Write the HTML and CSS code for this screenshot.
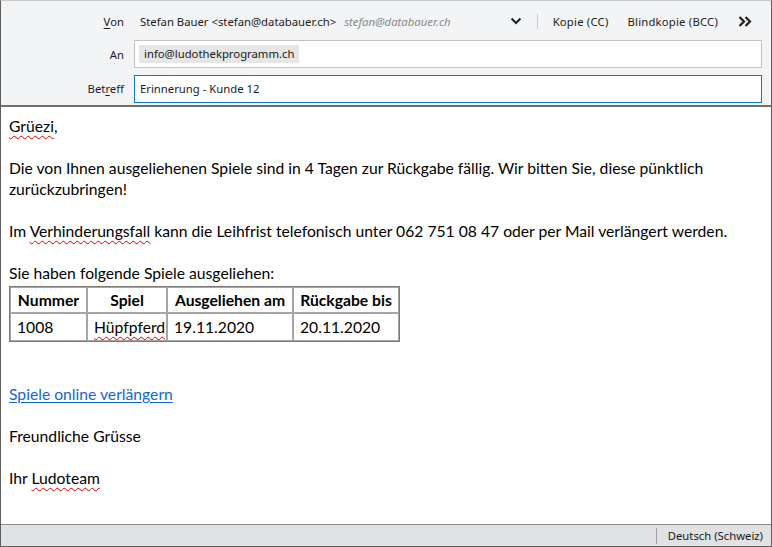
FILE: index.html
```html
<!DOCTYPE html>
<html lang="de">
<head>
<meta charset="utf-8">
<title>Erinnerung - Kunde 12</title>
<link rel="stylesheet" href="styles.css">
</head>
<body>
<div class="window">
  <div class="header">
    <div class="row row-from">
      <div class="label"><u>V</u>on</div>
      <div class="from-field">
        <span class="from-name">Stefan Bauer &lt;stefan@databauer.ch&gt;</span>
        <span class="from-alt">stefan@databauer.ch</span>
        <span class="spacer"></span>
        <svg class="chev" width="12" height="8" viewBox="0 0 12 8"><polyline points="1.5,1.5 6,6 10.5,1.5" fill="none" stroke="#222" stroke-width="2"/></svg>
        <span class="vsep"></span>
        <span class="hbtn">Kopie (CC)</span>
        <span class="hbtn">Blindkopie (BCC)</span>
        <svg class="more" width="14" height="11" viewBox="0 0 14 11"><polyline points="1.5,1 6,5.5 1.5,10" fill="none" stroke="#222" stroke-width="2.2"/><polyline points="7.5,1 12,5.5 7.5,10" fill="none" stroke="#222" stroke-width="2.2"/></svg>
      </div>
    </div>
    <div class="row row-to">
      <div class="label">An</div>
      <div class="box">
        <span class="chip">info@ludothekprogramm.ch</span>
      </div>
    </div>
    <div class="row row-subj">
      <div class="label">Bet<u>r</u>eff</div>
      <div class="box box-focus">Erinnerung - Kunde 12</div>
    </div>
  </div>

  <div class="body">
    <p class="line"><span class="sp">Grüezi</span>,</p>
    <p class="line"></p>
    <p class="line">Die von Ihnen ausgeliehenen Spiele sind in 4 Tagen zur Rückgabe fällig. Wir bitten Sie, diese pünktlich zurückzubringen!</p>
    <p class="line"></p>
    <p class="line">Im <span class="sp">Verhinderungsfall</span> kann die Leihfrist telefonisch unter 062 751 08 47 oder per Mail verlängert werden.</p>
    <p class="line"></p>
    <p class="line">Sie haben folgende Spiele ausgeliehen:</p>
    <table class="games">
      <colgroup>
        <col class="c1"><col class="c2"><col class="c3"><col class="c4">
      </colgroup>
      <tr>
        <th>Nummer</th>
        <th>Spiel</th>
        <th>Ausgeliehen am</th>
        <th>Rückgabe bis</th>
      </tr>
      <tr>
        <td>1008</td>
        <td class="tight"><span class="sp">Hüpfpferd</span></td>
        <td>19.11.2020</td>
        <td>20.11.2020</td>
      </tr>
    </table>
    <p class="line"></p>
    <p class="line"></p>
    <p class="line"><a class="link" href="#">Spiele online verlängern</a></p>
    <p class="line"></p>
    <p class="line">Freundliche Grüsse</p>
    <p class="line"></p>
    <p class="line">Ihr <span class="sp">Ludoteam</span></p>
  </div>

  <div class="status">
    <span class="ssep"></span>
    <span class="lang">Deutsch (Schweiz)</span>
  </div>
</div>
</body>
</html>
```

FILE: styles.css
```css
* { box-sizing: border-box; }
html, body { margin: 0; padding: 0; background: #fff; }

.window {
  width: 772px;
  height: 547px;
  display: flex;
  flex-direction: column;
  border-top: 1px solid #c9c9c9;
  border-left: 1px solid #5e5e5e;
  border-right: 1px solid #5e5e5e;
  border-bottom: 1px solid #5e5e5e;
  overflow: hidden;
}

.header {
  background: #f3f4f6;
  padding: 3px 9px 3px 0;
  border-bottom: 2px solid #6f6f6f;
  font-family: "Noto Sans", sans-serif;
  font-size: 11.3px;
  color: #1b1b1b;
}

.row {
  display: flex;
  align-items: center;
}
.row-from { height: 34px; margin-bottom: 2px; }
.row-to { height: 28px; margin-top: 1px; }
.row-subj { height: 28px; margin-top: 6px; padding-top: 1px; }

.label {
  width: 123px;
  text-align: right;
  flex: none;
  margin-right: 10px;
  color: #1b1b1b;
}
.label u { text-underline-offset: 2px; }

.from-field {
  flex: 1;
  display: flex;
  align-items: center;
  padding-left: 6px;
  padding-right: 10px;
}
.from-alt {
  margin-left: 8px;
  font-style: italic;
  color: #8a8a8a;
}
.spacer { flex: 1; }
.chev { margin-right: 15px; }
.vsep {
  width: 1px;
  height: 15px;
  background: #c8c8c8;
  margin-right: 15px;
}
.hbtn { margin-right: 19px; letter-spacing: 0.2px; }
.more { margin-left: 1px; }

.box {
  flex: 1;
  height: 28px;
  background: #fff;
  border: 1px solid #c2c2c2;
  display: flex;
  align-items: center;
  padding-left: 4px;
}
.box-focus {
  border-color: #0a78d4;
  padding-left: 5px;
}
.chip {
  background: #e6e6e6;
  height: 18px;
  line-height: 18px;
  padding: 0 5px;
}

.body {
  flex: 1;
  padding: 9px 8px 0 8px;
  font-family: "Lato", sans-serif;
  font-size: 15.7px;
  color: #000;
}
.line {
  margin: 0;
  min-height: 21px;
  line-height: 21px;
}
.sp {
  text-decoration: underline wavy #e00000;
  text-decoration-thickness: 1px;
  text-underline-offset: 3px;
}
.link {
  color: #1068d2;
  text-decoration: underline;
  text-underline-offset: 2px;
}

.games {
  border-collapse: separate;
  border-spacing: 0;
  border: 1px solid #7a7a7a;
  margin-top: 2px;
  table-layout: fixed;
  width: 390px;
}
.games th, .games td {
  border: 1px solid #a6a6a6;
  padding: 0 6px;
  line-height: 21px;
  text-align: left;
  white-space: nowrap;
  overflow: hidden;
}
.games th { font-weight: bold; text-align: center; height: 26px; padding: 0 3px; }
.games td { height: 28px; }
.games td.tight { padding: 0 2px 0 6px; overflow: visible; }
.games .c1 { width: 77px; }
.games .c2 { width: 80px; }
.games .c3 { width: 126px; }
.games .c4 { width: 106px; }

.status {
  height: 22px;
  background: #e1e2e4;
  border-top: 1px solid #8a8a8a;
  display: flex;
  align-items: center;
  justify-content: flex-end;
  padding-right: 8px;
  font-family: "Noto Sans", sans-serif;
  font-size: 11.3px;
  color: #1b1b1b;
}
.ssep {
  width: 1px;
  height: 16px;
  background: #a0a0a0;
  margin-right: 11px;
}
```
